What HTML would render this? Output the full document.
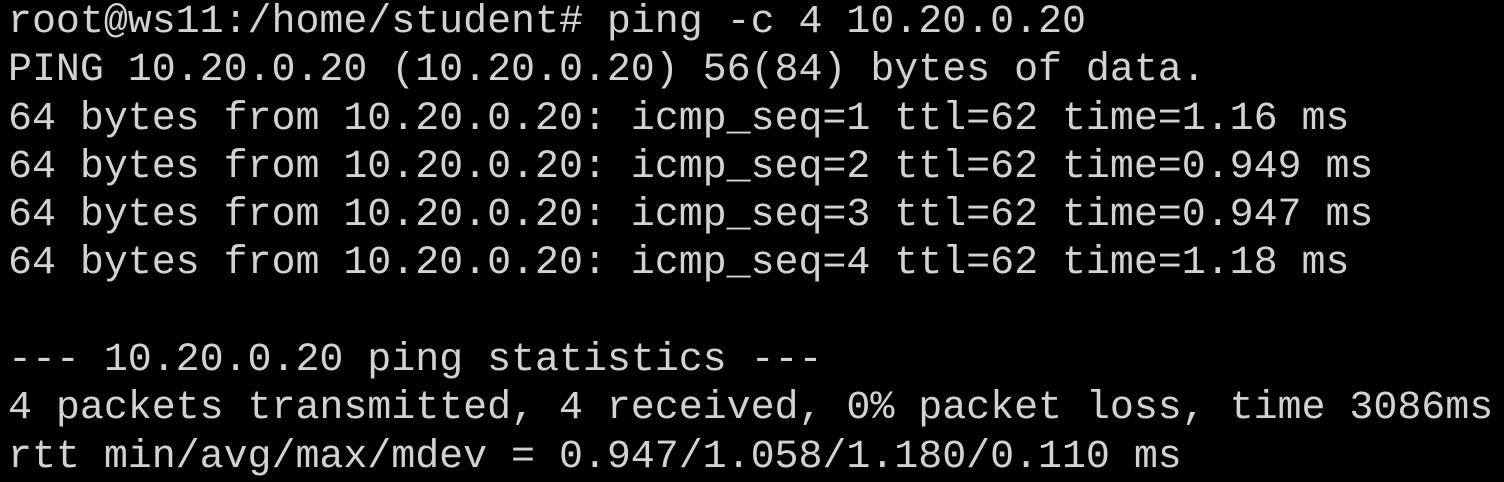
<!DOCTYPE html>
<html><head><meta charset="utf-8"><style>
html,body{margin:0;padding:0;background:#000;width:1504px;height:480px;overflow:hidden}
pre{margin:0;position:absolute;left:8px;top:-1px;font-family:"Liberation Mono","DejaVu Sans Mono",monospace;font-size:40px;line-height:48.3px;color:#d2d2d2;letter-spacing:-0.05px;white-space:pre}
</style></head><body><pre>root@ws11:/home/student# ping -c 4 10.20.0.20
PING 10.20.0.20 (10.20.0.20) 56(84) bytes of data.
64 bytes from 10.20.0.20: icmp_seq=1 ttl=62 time=1.16 ms
64 bytes from 10.20.0.20: icmp_seq=2 ttl=62 time=0.949 ms
64 bytes from 10.20.0.20: icmp_seq=3 ttl=62 time=0.947 ms
64 bytes from 10.20.0.20: icmp_seq=4 ttl=62 time=1.18 ms

--- 10.20.0.20 ping statistics ---
4 packets transmitted, 4 received, 0% packet loss, time 3086ms
rtt min/avg/max/mdev = 0.947/1.058/1.180/0.110 ms</pre></body></html>
